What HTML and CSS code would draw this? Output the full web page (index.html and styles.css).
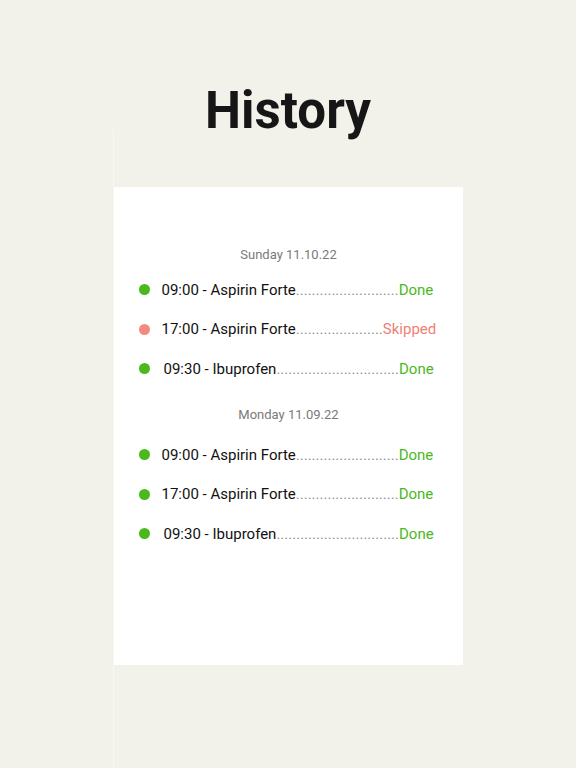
FILE: index.html
```html
<!DOCTYPE html>
<html lang="en">
<head>
<meta charset="utf-8">
<title>History</title>
<link rel="stylesheet" href="styles.css">
</head>
<body>
<div class="page">
  <h1 class="title">History</h1>
  <div class="panel">
    <section class="card">
      <h2 class="day">Sunday 11.10.22</h2>
      <ul class="doses doses--first">
        <li class="dose"><span class="dot dot--done"></span><span class="label">09:00 - Aspirin Forte<span class="leader">..........................</span><span class="status status--done">Done</span></span></li>
        <li class="dose"><span class="dot dot--skipped"></span><span class="label">17:00 - Aspirin Forte<span class="leader">......................</span><span class="status status--skipped">Skipped</span></span></li>
        <li class="dose"><span class="dot dot--done"></span><span class="label label--shift">09:30 - Ibuprofen<span class="leader">...............................</span><span class="status status--done">Done</span></span></li>
      </ul>
      <h2 class="day day--second">Monday 11.09.22</h2>
      <ul class="doses doses--second">
        <li class="dose"><span class="dot dot--done"></span><span class="label">09:00 - Aspirin Forte<span class="leader">..........................</span><span class="status status--done">Done</span></span></li>
        <li class="dose"><span class="dot dot--done"></span><span class="label">17:00 - Aspirin Forte<span class="leader">..........................</span><span class="status status--done">Done</span></span></li>
        <li class="dose"><span class="dot dot--done"></span><span class="label label--shift">09:30 - Ibuprofen<span class="leader">...............................</span><span class="status status--done">Done</span></span></li>
      </ul>
    </section>
  </div>
</div>
</body>
</html>
```
FILE: styles.css
```css
* { box-sizing: border-box; }

html, body {
  margin: 0;
  padding: 0;
}

body {
  background: #f3f2ea;
  font-family: Roboto, "Liberation Sans", Arial, sans-serif;
  color: #111111;
}

.page {
  min-height: 100vh;
  display: flex;
  flex-direction: column;
}

.title {
  margin: 92px 0 0 0;
  font-size: 51px;
  font-weight: 700;
  line-height: 38px;
  text-align: center;
  color: #161616;
  letter-spacing: 0;
}

.panel {
  flex: 1;
  margin-left: 113px;
  width: 351px;
  border-left: 1px solid #f8f8f3;
  padding-top: 57px;
}

.card {
  width: 349px;
  height: 478px;
  background: #ffffff;
  padding-top: 58px;
}

.day {
  margin: 0;
  font-size: 13px;
  font-weight: 400;
  line-height: 20px;
  text-align: center;
  color: #7a7a7a;
}

.day--second {
  margin-top: 16.5px;
}

.doses {
  list-style: none;
  margin: 0;
  padding: 0;
}

.doses--first { margin-top: 5px; }
.doses--second { margin-top: 10px; }

.dose {
  height: 39.5px;
  display: flex;
  align-items: center;
  padding-left: 24.5px;
  gap: 12px;
}

.dot {
  width: 11px;
  height: 11px;
  border-radius: 50%;
  flex: none;
}

.dot--done { background: #4bb81c; }
.dot--skipped { background: #f38a82; }

.label {
  font-size: 15px;
  line-height: 20px;
  color: #111111;
  white-space: nowrap;
}

.label--shift { margin-left: 2px; }

.leader {
  color: #8f8f8f;
}

.status--done { color: #4bb81c; }
.status--skipped { color: #f07f74; }
```
